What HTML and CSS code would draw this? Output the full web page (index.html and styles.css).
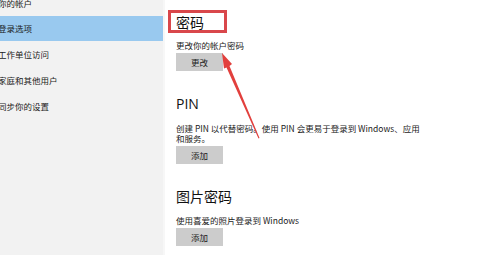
FILE: index.html
```html
<!DOCTYPE html>
<html lang="zh-CN">
<head>
<meta charset="utf-8">
<title>登录选项</title>
<link rel="stylesheet" href="styles.css">
</head>
<body>
<div class="app">
  <nav class="sidebar">
    <div class="nav-item">你的帐户</div>
    <div class="nav-item selected">登录选项</div>
    <div class="nav-item">工作单位访问</div>
    <div class="nav-item">家庭和其他用户</div>
    <div class="nav-item">同步你的设置</div>
  </nav>
  <main class="content">
    <section class="group first">
      <h2 class="title">密码</h2>
      <p class="desc">更改你的帐户密码</p>
      <button class="btn">更改</button>
    </section>
    <section class="group">
      <h2 class="title latin">PIN</h2>
      <p class="desc wrap">创建 PIN 以代替密码。使用 PIN 会更易于登录到 Windows、应用和服务。</p>
      <button class="btn">添加</button>
    </section>
    <section class="group">
      <h2 class="title">图片密码</h2>
      <p class="desc">使用喜爱的照片登录到 Windows</p>
      <button class="btn">添加</button>
    </section>
  </main>
</div>
<div class="mark-box"></div>
<svg class="mark-arrow" width="492" height="255" viewBox="0 0 492 255">
  <polygon points="222,53 232,64 229.5,66 259.5,138 258.5,138.4 226.5,67.5 224,68.5" fill="#e2403d"/>
</svg>
</body>
</html>
```
FILE: styles.css
```css
* { box-sizing: border-box; }
html, body { margin: 0; padding: 0; }
body {
  width: 492px;
  height: 255px;
  overflow: hidden;
  background: #ffffff;
  font-family: "Noto Sans CJK SC", "Noto Sans", sans-serif;
  color: #1a1a1a;
  position: relative;
}
.app {
  display: flex;
  height: 255px;
}
.sidebar {
  width: 163px;
  flex: none;
  background: #f2f2f2;
}
.sidebar .nav-item:first-child { margin-top: -10px; }
.nav-item {
  height: 26px;
  line-height: 26px;
  font-size: 8.5px;
  text-indent: -2px;
  white-space: nowrap;
  overflow: hidden;
}
.nav-item.selected {
  background: #99c9ef;
  height: 25px;
  line-height: 25px;
}
.content {
  flex: 1;
  padding: 12px 0 0 11px;
  background: #ffffff;
  border-left: 2px solid #f7f7f7;
}
.group { margin: 0; }
.title {
  margin: 0;
  font-size: 14px;
  font-weight: 400;
  line-height: 20px;
  color: #111;
}
.title.latin {
  font-family: "Open Sans", "Noto Sans", sans-serif;
  font-size: 14px;
}
.group + .group { margin-top: 23px; }
.group:last-child { margin-top: 22px; }
.desc {
  margin: 7px 0 0 0;
  font-size: 8.5px;
  line-height: 12px;
  color: #1a1a1a;
}
.desc.wrap {
  margin-top: 9px;
  line-height: 10px;
  width: 248px;
}
.group:last-child .desc { margin-top: 8px; }
.btn {
  display: block;
  margin-top: 2px;
  width: 47px;
  height: 18px;
  border: none;
  padding: 0;
  background: #cccccc;
  font-family: "Noto Sans CJK SC", sans-serif;
  font-size: 8.5px;
  color: #1a1a1a;
}
.desc.wrap + .btn { margin-top: 3px; }
.mark-box {
  position: absolute;
  left: 168px;
  top: 10px;
  width: 59px;
  height: 23px;
  border: 3px solid #d9474b;
}
.mark-arrow {
  position: absolute;
  left: 0;
  top: 0;
}
```
